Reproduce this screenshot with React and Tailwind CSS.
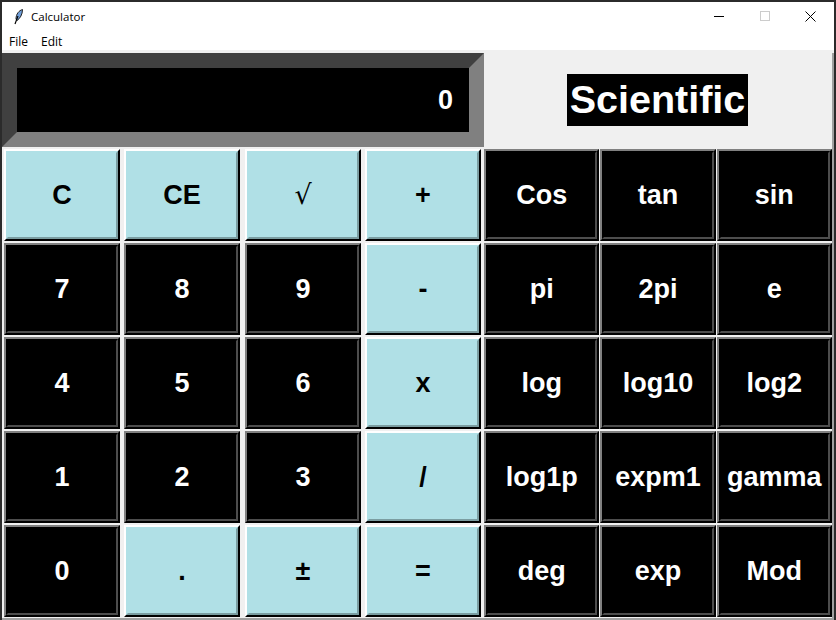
import React from 'react';

const rows = [
    [['C', 1], ['CE', 1], ['√', 1], ['+', 1], ['Cos'], ['tan'], ['sin']],
    [['7'], ['8'], ['9'], ['-', 1], ['pi'], ['2pi'], ['e']],
    [['4'], ['5'], ['6'], ['x', 1], ['log'], ['log10'], ['log2']],
    [['1'], ['2'], ['3'], ['/', 1], ['log1p'], ['expm1'], ['gamma']],
    [['0'], ['.', 1], ['±', 1], ['=', 1], ['deg'], ['exp'], ['Mod']],
];

function Key({ label, light }) {
    if (light) {
        return (
            <button className="flex-1 min-w-0 border-2 border-t-white border-l-white border-r-black border-b-black">
                <span className={`flex h-full items-center justify-center border-2 border-t-[#b0e0e6] border-l-[#b0e0e6] border-r-[#7b9da1] border-b-[#7b9da1] bg-[#b0e0e6] text-black ${label === '√' ? "font-['DejaVu_Serif',serif] font-normal" : ''}`}>
                    {label}
                </span>
            </button>
        );
    }
    return (
        <button className="flex-1 min-w-0 border-2 border-t-[#808080] border-l-[#808080] border-r-black border-b-black">
            <span className="flex h-full items-center justify-center border-2 border-t-black border-l-black border-r-[#4d4d4d] border-b-[#4d4d4d] bg-black text-white">
                {label}
            </span>
        </button>
    );
}

export default function App() {
    return (
        <div className="flex h-[620px] w-[836px] flex-col overflow-hidden border-x-2 border-t-2 border-[#2b2b2b] bg-[#f0f0f0] font-['Liberation_Sans',sans-serif]">
            {/* title bar */}
            <div className="flex h-[30px] shrink-0 items-center bg-white pl-[11px] font-['Open_Sans',sans-serif] text-[11.5px] text-black">
                <svg width="12" height="16" viewBox="0 0 12 16" className="mr-[6px]">
                    <path d="M9.5 0.5C6 1.5 3 5 3 10l1 1.5c3-2 5.5-6 5.5-11z" fill="#6f9fdc" stroke="#222" strokeWidth="1" />
                    <path d="M5 7L2 15" stroke="#000" strokeWidth="1.2" />
                </svg>
                <span>Calculator</span>
                <div className="ml-auto flex items-center pb-[2px]">
                    <div className="flex w-[46px] justify-center">
                        <div className="h-px w-[10px] bg-black" />
                    </div>
                    <div className="flex w-[46px] justify-center">
                        <div className="h-[10px] w-[10px] border border-[#cccccc]" />
                    </div>
                    <div className="flex w-[46px] justify-center pr-[1px]">
                        <svg width="11" height="11" viewBox="0 0 11 11">
                            <path d="M0.5 0.5L10.5 10.5M10.5 0.5L0.5 10.5" stroke="#000" strokeWidth="1" />
                        </svg>
                    </div>
                </div>
            </div>

            {/* menu */}
            <div className="flex h-[18px] shrink-0 items-center gap-[13px] bg-white pl-[7px] pt-[1px] font-['Open_Sans',sans-serif] text-[12px] text-black">
                <span>File</span>
                <span>Edit</span>
            </div>

            <div className="mt-[3px] flex flex-1 flex-col border-r-2 border-b-2 border-[#a0a0a0]">
                {/* display row */}
                <div className="flex h-[94px] shrink-0">
                    <div className="w-[482px] border-[15px] border-t-[#404040] border-l-[#404040] border-r-[#808080] border-b-[#808080] bg-black">
                        <div className="flex h-full items-center justify-end pr-[16px] text-[27px] font-bold leading-none text-white">0</div>
                    </div>
                    <div className="flex flex-1 items-center justify-center pr-[1px]">
                        <div className="flex h-[52px] w-[181px] items-center justify-center bg-black text-[39.5px] font-bold leading-none text-white">Scientific</div>
                    </div>
                </div>

                {/* keys */}
                <div className="mt-[2px] flex flex-1 flex-col gap-[2px] pl-[2px] text-[27px] font-bold">
                    {rows.map((row, i) => (
                        <div key={i} className="flex h-[92px] shrink-0">
                            {row.slice(0, 4).map((k, j) => (
                                <div key={k[0]} className={`flex w-[116px] shrink-0 ${j === 0 ? '' : j === 2 ? 'ml-[5px]' : 'ml-[4px]'}`}>
                                    <Key label={k[0]} light={k[1]} />
                                </div>
                            ))}
                            <div className="ml-[3px] flex flex-1 gap-[1px]">
                                {row.slice(4).map(k => <Key key={k[0]} label={k[0]} />)}
                            </div>
                        </div>
                    ))}
                </div>
            </div>
        </div>
    );
}
